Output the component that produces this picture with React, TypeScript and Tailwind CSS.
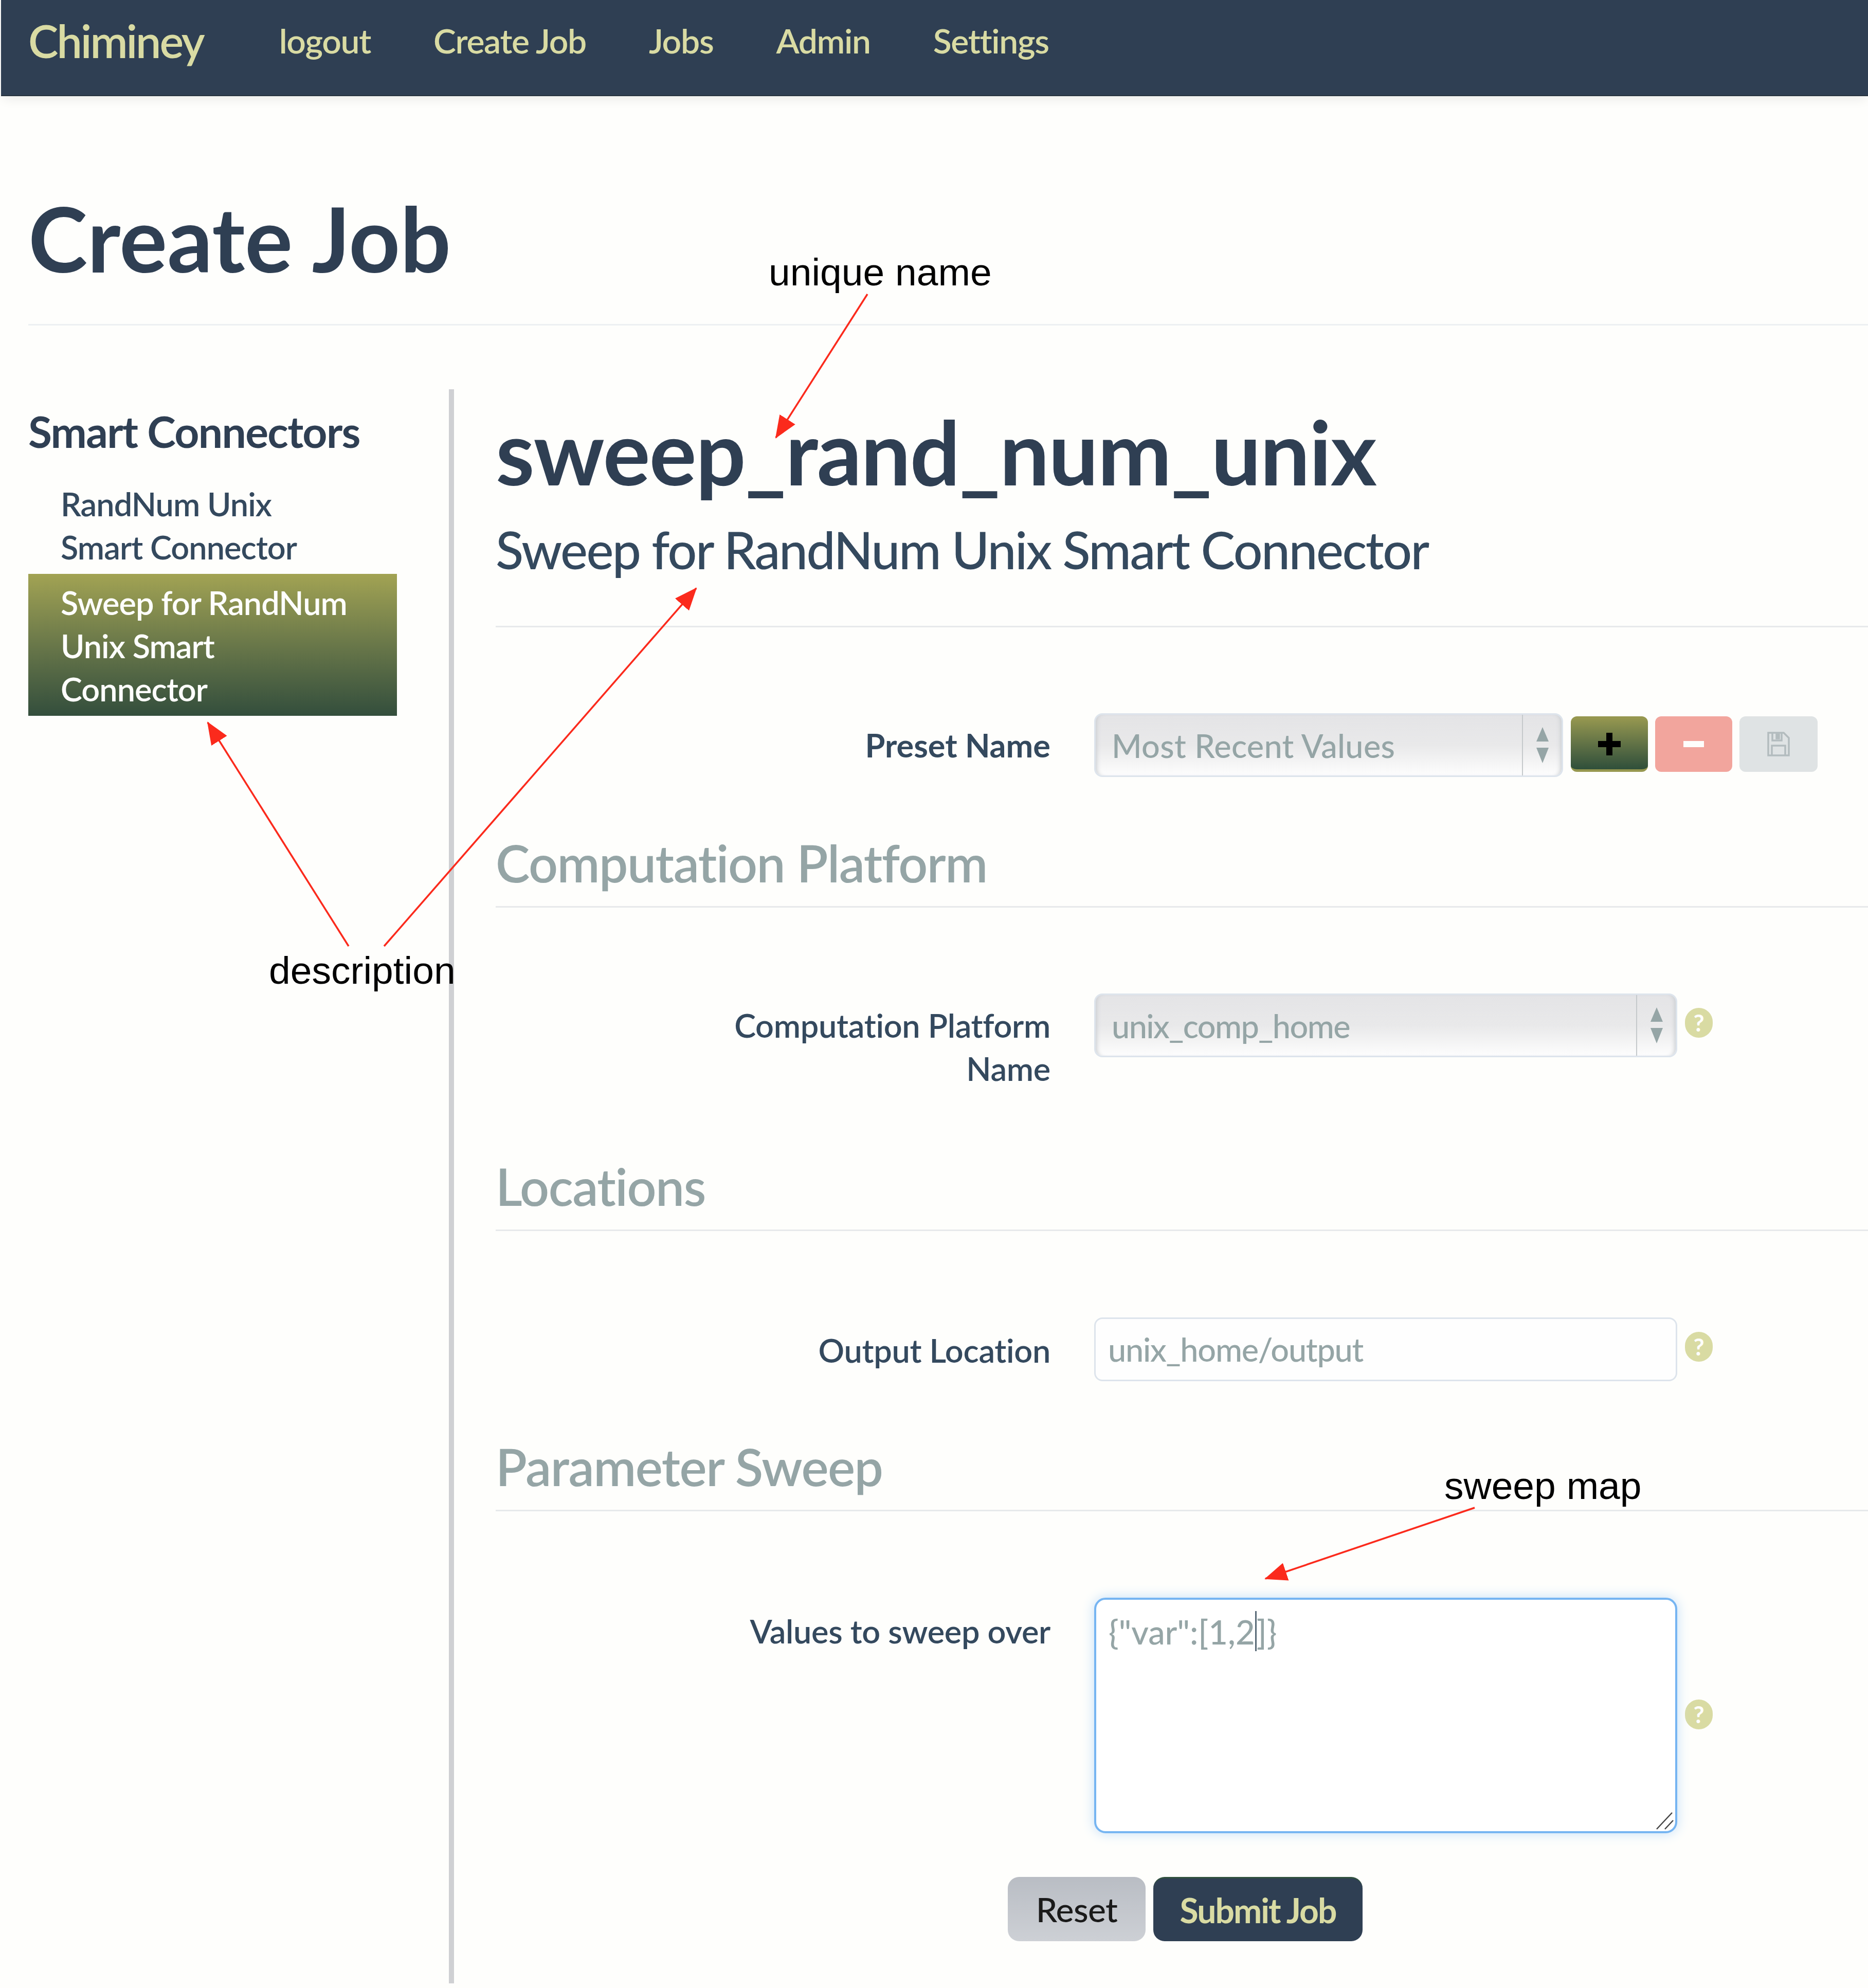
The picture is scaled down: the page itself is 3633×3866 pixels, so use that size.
import React from "react";

function Help({ className = "" }: { className?: string }) {
  return (
    <span className={"flex h-[58px] w-[54px] shrink-0 items-center justify-center rounded-full bg-[#d9dba3] text-[46px] font-bold leading-none text-[#fefefc] " + className}>?</span>
  );
}

function Arrows() {
  return (
    <svg width="48" height="78" viewBox="0 0 48 78">
      <path d="M24 4 L36 32 L12 32 Z" fill="#95a5a6" />
      <path d="M24 74 L36 44 L12 44 Z" fill="#95a5a6" />
    </svg>
  );
}

function Select({ value, w, tracking }: { value: string; w: string; tracking: string }) {
  return (
    <div className={"flex h-[124px] items-stretch rounded-[16px] border-[3px] border-[#dde4ec] bg-gradient-to-b from-[#e4e4e6] via-[#e9e9ea] to-[#fdfdfd] shadow-[inset_8px_0_8px_-6px_#c9ccd0,inset_-8px_0_8px_-6px_#c9ccd0] " + w}>
      <div className={"flex-1 truncate pl-[31px] pt-[24px] text-[63px] font-medium leading-[72px] text-[#95a5a6] " + tracking}>{value}</div>
      <div className="flex w-[77px] items-center justify-center border-l-[2px] border-[#c5c9cb]">
        <Arrows />
      </div>
    </div>
  );
}

function Label({ children }: { children: React.ReactNode }) {
  return <div className="w-[1079px] shrink-0 text-right text-[63px] font-semibold leading-[84px] tracking-[-0.005em] text-[#34495e]">{children}</div>;
}

function Section({ title, mt }: { title: string; mt: string }) {
  return <h3 className={"border-b-[3px] border-[#e7e9eb] pb-[25px] text-[100px] font-semibold leading-[120px] tracking-[-0.015em] text-[#95a5a6] " + mt}>{title}</h3>;
}

export default function App() {
  return (
    <div className="relative h-[3866px] w-[3633px] overflow-hidden bg-[#fefefc] font-['Lato',sans-serif]">
      <nav className="ml-[2px] flex h-[187px] items-start border-b-[2px] border-[#26333f] bg-[#2f3f53] pl-[53px] pt-[29px] text-[#d9dba3] shadow-[0_10px_20px_-4px_#ececea]">
        <span className="text-[88px] font-semibold leading-[100px] tracking-[-0.035em]">Chiminey</span>
        <div className="ml-[147px] flex gap-[122px] pt-[10px] text-[66px] font-semibold leading-[80px] tracking-[-0.02em]">
          <span>logout</span>
          <span>Create Job</span>
          <span>Jobs</span>
          <span>Admin</span>
          <span>Settings</span>
        </div>
      </nav>

      <div className="pl-[55px]">
        <h1 className="h-[446px] border-b-[3px] border-[#edf0f2] pt-[190px] text-[174px] font-bold leading-[172px] text-[#2f3f53]">Create Job</h1>
        <div className="mt-[124px] flex">
          <aside className="h-[3100px] w-[828px] shrink-0 border-r-[10px] border-[#cfd0d3] pt-[40px]">
            <div className="text-[84px] font-bold leading-[84px] tracking-[-0.02em] text-[#2f3f53]">Smart Connectors</div>
            <div className="mt-[57px] pl-[63px] text-[63px] font-semibold leading-[84px] tracking-[-0.015em] text-[#34495e]">
              RandNum Unix<br />Smart Connector
            </div>
            <div className="mt-[10px] h-[276px] w-[717px] bg-gradient-to-b from-[#a2a353] to-[#334e3c] pl-[63px] pt-[14px] text-[63px] font-semibold leading-[84px] tracking-[-0.015em] text-[#fefefc]">
              Sweep for RandNum<br />Unix Smart<br />Connector
            </div>
          </aside>

          <main className="ml-[81px] flex-1">
            <h2 className="mt-[21px] text-[172px] font-bold leading-[200px] tracking-[-0.01em] text-[#2f3f53]">sweep_rand_num_unix</h2>
            <div className="mt-[30px] h-[212px] border-b-[3px] border-[#e7e9eb] text-[100px] font-medium leading-[120px] tracking-[-0.025em] text-[#34495e]">Sweep for RandNum Unix Smart Connector</div>

            <div className="mt-[167px] flex items-start">
              <div className="w-[1079px] shrink-0 pt-[20px] text-right text-[63px] font-bold leading-[84px] text-[#34495e]">Preset Name</div>
              <div className="ml-[85px] flex items-start">
                <Select value="Most Recent Values" w="w-[912px]" tracking="tracking-[0.005em]" />
                <button className="ml-[15px] mt-[6px] flex h-[108px] w-[150px] items-center justify-center rounded-[12px] border-t-[5px] border-b-[5px] border-[#96974f] bg-gradient-to-b from-[#94964f] to-[#2f4f3a]">
                  <svg width="44" height="44" viewBox="0 0 44 44"><path d="M16 0h12v16h16v12H28v16H16V28H0V16h16z" fill="#000" /></svg>
                </button>
                <button className="ml-[14px] mt-[6px] flex h-[108px] w-[150px] items-center justify-center rounded-[12px] bg-[#f2a59d]">
                  <span className="block h-[12px] w-[40px] bg-[#fefefc]" />
                </button>
                <button className="ml-[14px] mt-[6px] flex h-[108px] w-[152px] items-center justify-center rounded-[12px] bg-[#dfe3e4]">
                  <svg width="46" height="50" viewBox="0 0 46 50" fill="none" stroke="#b3bcbe" strokeWidth="3.5"><path d="M3 3h30l10 10v34H3z" /><path d="M11 3v15h18V3" /><path d="M10 47V28h26v19" /><path d="M19 6h5v8h-5z" fill="#b3bcbe" /></svg>
                </button>
              </div>
            </div>

            <Section title="Computation Platform" mt="mt-[106px]" />
            <div className="mt-[167px] flex items-start">
              <div className="pt-[20px]"><Label>Computation Platform<br />Name</Label></div>
              <div className="ml-[85px] flex items-start">
                <Select value="unix_comp_home" w="w-[1134px]" tracking="tracking-[-0.025em]" />
                <Help className="ml-[15px] mt-[28px]" />
              </div>
            </div>

            <Section title="Locations" mt="mt-[126px]" />
            <div className="mt-[168px] flex items-start">
              <div className="pt-[22px]"><Label>Output Location</Label></div>
              <div className="ml-[85px] flex items-start">
                <div className="h-[124px] w-[1134px] rounded-[16px] border-[3px] border-[#dde4ec] bg-[#fefefe] pl-[24px] pt-[23px] text-[63px] font-medium leading-[72px] tracking-[-0.02em] text-[#95a5a6]">unix_home/output</div>
                <Help className="ml-[15px] mt-[28px]" />
              </div>
            </div>

            <Section title="Parameter Sweep" mt="mt-[105px]" />
            <div className="mt-[168px] flex items-start">
              <div className="pt-[23px]"><Label>Values to sweep over</Label></div>
              <div className="ml-[85px] flex items-center">
                <div className="relative h-[458px] w-[1134px] rounded-[22px] border-[4px] border-[#76b5f2] bg-white pl-[24px] pt-[26px] text-[65px] font-medium leading-[72px] text-[#95a5a6] shadow-[0_0_24px_#c4dff8]">
                  {'{"var":[1,2'}<span className="mb-[-13px] mt-[-30px] inline-block h-[78px] w-[3px] bg-[#5a6b78]" />{']}'}
                  <svg width="36" height="36" viewBox="0 0 36 36" className="absolute bottom-[2px] right-[2px]" stroke="#444" strokeWidth="2.5"><path d="M2 34 L32 2" /><path d="M18 34 L34 17" /></svg>
                </div>
                <Help className="-mt-[5px] ml-[15px]" />
              </div>
            </div>

            <div className="ml-[996px] mt-[85px] flex gap-[15px]">
              <button className="h-[125px] w-[268px] rounded-[22px] bg-gradient-to-b from-[#b9bdc4] to-[#cdd0d5] text-[66px] font-medium tracking-[-0.01em] text-[#1a1a1a]">Reset</button>
              <button className="h-[125px] w-[407px] rounded-[22px] border-t-[3px] border-[#30513f] bg-[#2f3f53] text-[66px] font-bold tracking-[-0.03em] text-[#d9dba3]">Submit Job</button>
            </div>
          </main>
        </div>
      </div>

      <svg className="pointer-events-none absolute left-0 top-0" width="3633" height="3866" viewBox="0 0 3633 3866">
        <defs>
          <marker id="ah" markerUnits="userSpaceOnUse" markerWidth="46" markerHeight="36" refX="42" refY="18" orient="auto">
            <path d="M0 0 L44 18 L0 36 Z" fill="#fb2a1c" />
          </marker>
        </defs>
        <g stroke="#fb2a1c" strokeWidth="3.5" fill="none">
          <line x1="1687" y1="572" x2="1509" y2="851" markerEnd="url(#ah)" />
          <line x1="747" y1="1840" x2="1354" y2="1144" markerEnd="url(#ah)" />
          <line x1="678" y1="1840" x2="404" y2="1405" markerEnd="url(#ah)" />
          <line x1="2868" y1="2932" x2="2461" y2="3070" markerEnd="url(#ah)" />
        </g>
      </svg>
      <span className="absolute left-[1495px] top-[486px] font-['Liberation_Sans',sans-serif] text-[75px] leading-[86px] text-black">unique name</span>
      <span className="absolute left-[523px] top-[1844px] font-['Liberation_Sans',sans-serif] text-[75px] leading-[86px] text-black">description</span>
      <span className="absolute left-[2809px] top-[2846px] font-['Liberation_Sans',sans-serif] text-[75px] leading-[86px] text-black">sweep map</span>
    </div>
  );
}
